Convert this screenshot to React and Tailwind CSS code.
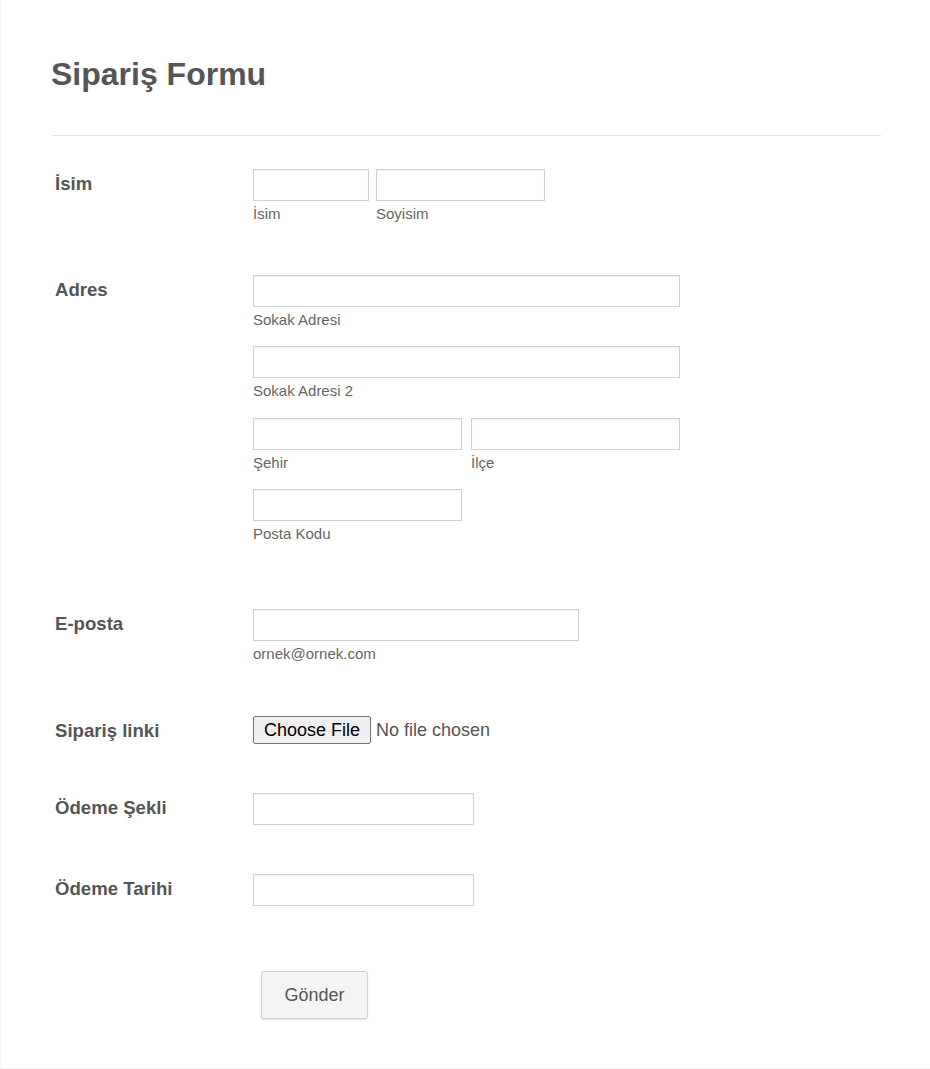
import React from "react";

const inputCls =
  "block h-[32px] border border-[#d2d2d2] bg-white shadow-[inset_0_1px_1px_rgba(0,0,0,0.06)]";

function Field({ w, sub }) {
  return (
    <div className="flex flex-col">
      <input type="text" className={`${inputCls} ${w}`} />
      {sub && (
        <span className="mt-[4px] text-[15px] leading-[18px] text-[#666]">{sub}</span>
      )}
    </div>
  );
}

function Row({ label, children, className = "" }) {
  return (
    <div className={`flex ${className}`}>
      <div className="w-[202px] shrink-0 pl-[4px] pt-[4px] text-[18.6px] font-bold leading-[22px] text-[#555]">
        {label}
      </div>
      <div className="flex flex-col">{children}</div>
    </div>
  );
}

export default function App() {
  return (
    <div
      className="min-h-[1069px] w-full border-l border-b border-[#f3f3f3] bg-white pl-[50px]"
      style={{ fontFamily: '"Liberation Sans", Arial, sans-serif' }}
    >
      <h1 className="pt-[55px] text-[32px] font-bold leading-[38px] text-[#555]">
        Sipariş Formu
      </h1>
      <div className="mt-[42px] h-px w-[830px] bg-[#e6e6e6]" />

      <Row label="İsim" className="mt-[33px]">
        <div className="flex gap-[7px]">
          <Field w="w-[116px]" sub="İsim" />
          <Field w="w-[169px]" sub="Soyisim" />
        </div>
      </Row>

      <Row label="Adres" className="mt-[52px]">
        <Field w="w-[427px]" sub="Sokak Adresi" />
        <div className="mt-[17px]">
          <Field w="w-[427px]" sub="Sokak Adresi 2" />
        </div>
        <div className="mt-[18px] flex gap-[9px]">
          <Field w="w-[209px]" sub="Şehir" />
          <Field w="w-[209px]" sub="İlçe" />
        </div>
        <div className="mt-[17px]">
          <Field w="w-[209px]" sub="Posta Kodu" />
        </div>
      </Row>

      <Row label="E-posta" className="mt-[66px]">
        <Field w="w-[326px]" sub="ornek@ornek.com" />
      </Row>

      <Row label="Sipariş linki" className="mt-[53px]">
        <div className="flex items-center gap-[5px]">
          <button
            type="button"
            className="h-[28px] rounded-[2px] border border-[#767676] bg-[#efefef] px-[10px] text-[18px] leading-[20px] text-black"
          >
            Choose File
          </button>
          <span className="text-[18px] leading-[22px] text-[#555]">No file chosen</span>
        </div>
      </Row>

      <Row label="Ödeme Şekli" className="mt-[49px]">
        <Field w="w-[221px]" />
      </Row>

      <Row label="Ödeme Tarihi" className="mt-[49px]">
        <Field w="w-[221px]" />
      </Row>

      <div className="mt-[65px] pl-[210px]">
        <button
          type="button"
          className="h-[48px] w-[107px] rounded-[3px] border border-[#cfcfcf] bg-[#f4f4f4] text-[18px] text-[#555] shadow-[0_1px_2px_rgba(0,0,0,0.12)]"
        >
          Gönder
        </button>
      </div>
    </div>
  );
}
